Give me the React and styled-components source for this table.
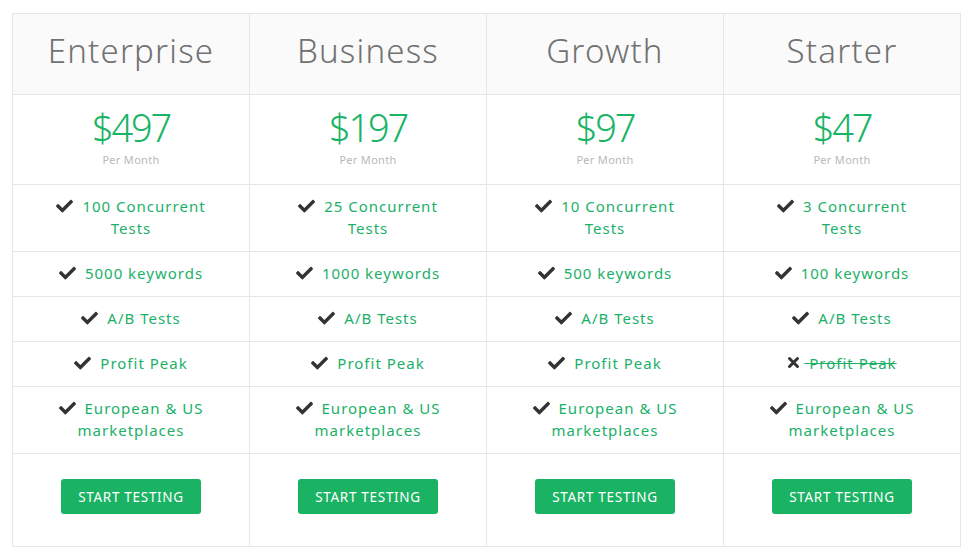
import React from "react";
import styled, { createGlobalStyle } from "styled-components";

const Global = createGlobalStyle`
  html, body { margin: 0; padding: 0; background: #fff; }
  body { font-family: "Noto Sans", "Open Sans", sans-serif; }
`;

const Page = styled.div`
  padding: 13px 9px 0 12px;
`;

const Table = styled.div`
  display: grid;
  grid-template-columns: repeat(4, 1fr);
  width: 948px;
  border-top: 1px solid #e6e6e6;
  border-left: 1px solid #e6e6e6;
`;

const Cell = styled.div`
  box-sizing: border-box;
  border-right: 1px solid #e6e6e6;
  border-bottom: 1px solid #e6e6e6;
  display: flex;
  flex-direction: column;
  align-items: center;
  justify-content: center;
  text-align: center;
`;

const HeadCell = styled(Cell)`
  background: #fafafa;
  height: 81px;
  padding-bottom: 6px;
`;

const PlanName = styled.div`
  font-family: "Noto Sans", sans-serif;
  font-weight: 300;
  font-size: 33px;
  line-height: 40px;
  color: #727272;
  letter-spacing: 1.2px;
`;

const PriceCell = styled(Cell)`
  height: 90px;
  justify-content: flex-start;
  padding-top: 12px;
`;

const Price = styled.div`
  font-family: "Noto Sans", sans-serif;
  font-weight: 300;
  font-size: 38px;
  line-height: 40px;
  letter-spacing: -2.2px;
  color: #19b466;
`;

const Per = styled.div`
  font-size: 11px;
  color: #b9b9b9;
  line-height: 14px;
  margin-top: 6px;
  letter-spacing: 0.3px;
`;

const FeatureCell = styled(Cell)`
  padding: 10px 12px 12px;
`;

const Feature = styled.div`
  max-width: 172px;
  font-size: 15px;
  line-height: 22px;
  color: #1bb068;
  letter-spacing: 1px;
  text-decoration: ${(p) => (p.$off ? "line-through" : "none")};
`;

const IconBox = styled.span`
  display: inline-block;
  width: ${(p) => p.$w || 17}px;
  height: 14px;
  margin-right: ${(p) => p.$gap || 9}px;
  vertical-align: -1px;
`;

const ButtonCell = styled(Cell)`
  padding: 25px 0 32px;
  justify-content: flex-start;
`;

const Button = styled.button`
  width: 140px;
  height: 35px;
  border: none;
  border-radius: 3px;
  background: #1ab263;
  color: #fff;
  font-family: "Noto Sans", sans-serif;
  font-size: 13.5px;
  letter-spacing: 0.7px;
  text-transform: uppercase;
  cursor: pointer;
  padding: 0;
`;

const Check = () => (
  <IconBox>
    <svg viewBox="0 0 512 400" width="17" height="14">
      <path
        fill="#333"
        d="M173.9 439.4L7.5 273c-10-10-10-26.2 0-36.2l36.2-36.2c10-10 26.2-10 36.2 0L192 312.7 432.1 72.6c10-10 26.2-10 36.2 0l36.2 36.2c10 10 10 26.2 0 36.2L210.1 439.4c-10 10-26.2 10-36.2 0z"
        transform="translate(0,-52)"
      />
    </svg>
  </IconBox>
);

const Cross = () => (
  <IconBox $w={13} $gap={4}>
    <svg viewBox="0 0 13 14" width="13" height="14">
      <path d="M2.5 2.5 L10.5 10.5 M10.5 2.5 L2.5 10.5" stroke="#333" strokeWidth="3" strokeLinecap="round" />
    </svg>
  </IconBox>
);

const plans = [
  { name: "Enterprise", price: "$497", tests: "100", kw: "5000", profit: true },
  { name: "Business", price: "$197", tests: "25", kw: "1000", profit: true },
  { name: "Growth", price: "$97", tests: "10", kw: "500", profit: true },
  { name: "Starter", price: "$47", tests: "3", kw: "100", profit: false },
];

const featureRows = [
  (p) => ({ text: `${p.tests} Concurrent Tests`, ok: true }),
  (p) => ({ text: `${p.kw} keywords`, ok: true }),
  () => ({ text: "A/B Tests", ok: true }),
  (p) => ({ text: "Profit Peak", ok: p.profit }),
  () => ({ text: "European & US marketplaces", ok: true }),
];

export default function App() {
  return (
    <>
      <Global />
      <Page>
        <Table>
          {plans.map((p) => (
            <HeadCell key={"h" + p.name}>
              <PlanName>{p.name}</PlanName>
            </HeadCell>
          ))}
          {plans.map((p) => (
            <PriceCell key={"p" + p.name}>
              <Price>{p.price}</Price>
              <Per>Per Month</Per>
            </PriceCell>
          ))}
          {featureRows.map((fn, i) =>
            plans.map((p) => {
              const f = fn(p);
              return (
                <FeatureCell key={i + p.name}>
                  <Feature>
                    {f.ok ? <Check /> : <Cross />}
                    {f.ok ? f.text : <Feature as="span" $off> {f.text}</Feature>}
                  </Feature>
                </FeatureCell>
              );
            })
          )}
          {plans.map((p) => (
            <ButtonCell key={"b" + p.name}>
              <Button>Start Testing</Button>
            </ButtonCell>
          ))}
        </Table>
      </Page>
    </>
  );
}
